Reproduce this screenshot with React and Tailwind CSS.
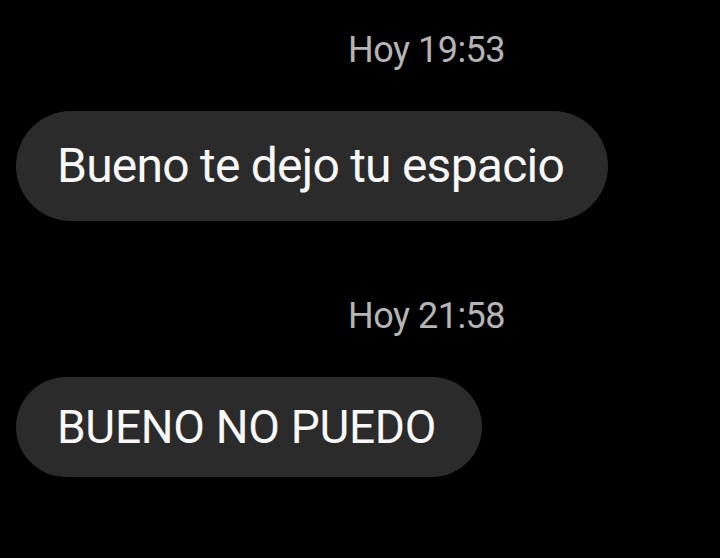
import React from 'react';

const messages = [
  { time: 'Hoy 19:53', text: 'Bueno te dejo tu espacio', tall: true },
  { time: 'Hoy 21:58', text: 'BUENO NO PUEDO', tall: false },
];

const App = () => {
  return (
    <div
      className="w-[720px] h-[558px] bg-black overflow-hidden flex flex-col pl-4 pt-[28px]"
      style={{ fontFamily: 'Roboto, "Liberation Sans", sans-serif' }}
    >
      {messages.map((m, i) => (
        <div key={i} className={`flex flex-col items-start ${i > 0 ? 'mt-[73px]' : ''}`}>
          <div className="ml-[332px] text-[#b5b5b5] text-[36px] leading-[44px] tracking-[-0.5px]">
            {m.time}
          </div>
          <div
            className={`mt-[39px] bg-[#2b2b2b] rounded-full pl-[41px] flex items-center text-[#f7f7f7] ${
              m.tall
                ? 'h-[110px] pr-[44px] text-[48px] tracking-[-0.77px]'
                : 'h-[100px] pr-[46px] text-[46px] tracking-[-0.3px]'
            }`}
          >
            {m.text}
          </div>
        </div>
      ))}
    </div>
  );
};

export default App;
